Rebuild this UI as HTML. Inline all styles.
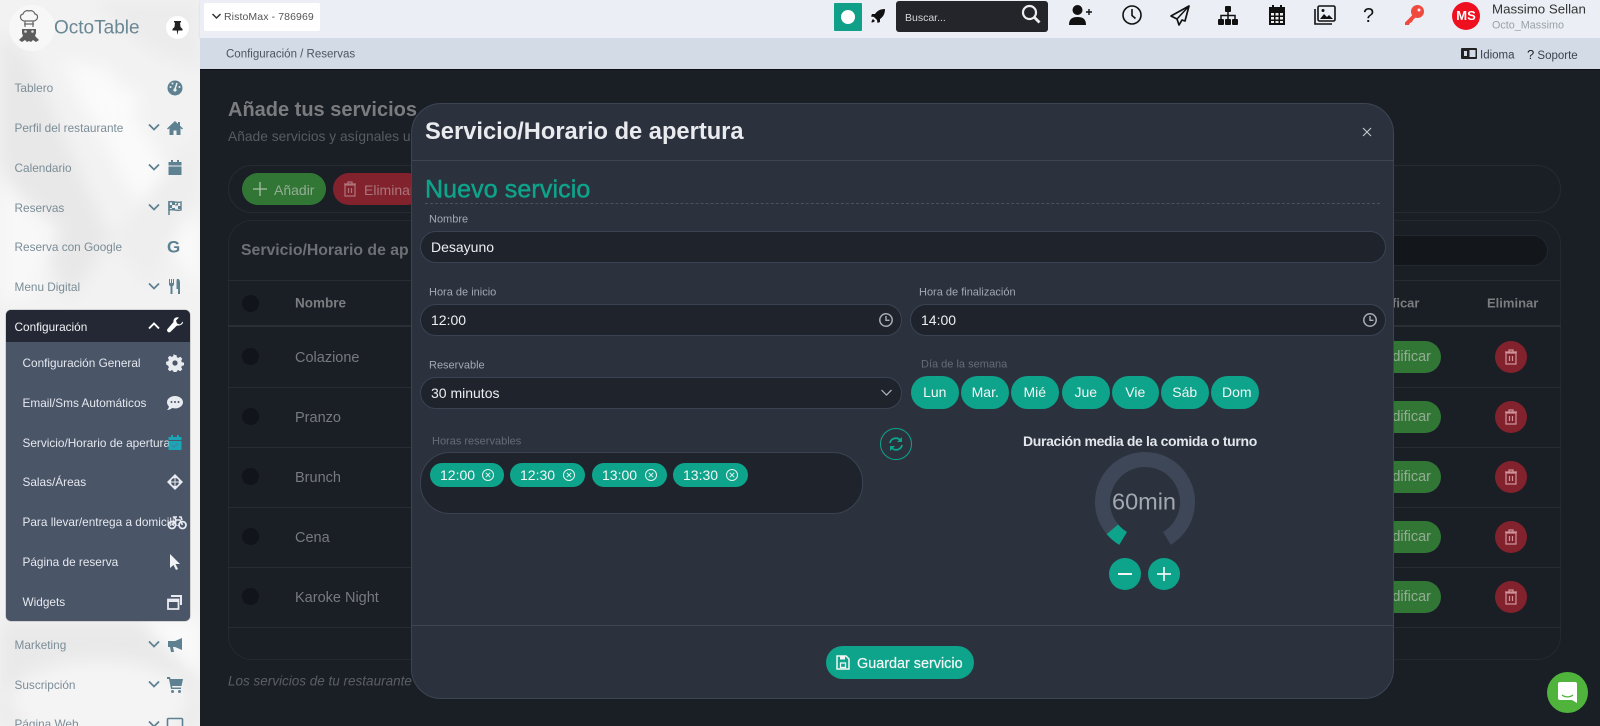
<!DOCTYPE html>
<html lang="es"><head><meta charset="utf-8"><title>OctoTable</title>
<style>
*{box-sizing:border-box}
html,body{margin:0;padding:0}
body{width:1600px;height:726px;overflow:hidden;position:relative;background:#1a1e25;font-family:"Liberation Sans",sans-serif}
.a{position:absolute}
.t{position:absolute;white-space:nowrap;transform:translateY(-50%);line-height:1;margin-top:1px}
.sb{left:14.5px;font-size:11.8px;color:#7b8d97}
.sub{left:22.5px;font-size:11.8px;color:#e6e9ee}
.ic{position:absolute;width:18px;height:18px;left:166px}
.ch{position:absolute;left:147px;width:14px;height:14px;margin-top:-1px}
.top{position:absolute;width:24px;height:24px;top:3px}
.nm{left:295px;font-size:14.5px;color:#777a7e}
.dot{position:absolute;left:242px;width:17px;height:17px;border-radius:50%;background:#11141a}
.ln{position:absolute;left:228px;width:1333px;height:1px;background:#272c34}
.mod{position:absolute;width:60px;left:1381px;height:32px;background:#327636;border-radius:0 16px 16px 0;color:#93ad94;font-size:14.5px;line-height:32px;text-align:right;padding-right:10px}
.del{position:absolute;left:1495px;width:32px;height:32px;border-radius:50%;background:#82222d}
.del svg{position:absolute;left:9px;top:8px}
.lab{font-size:11px;color:#a3a9b3}
.inp{position:absolute;background:#1f232c;border:1px solid #3b4352;border-radius:17px;color:#eceef1;font-size:14px;line-height:30px;padding-left:10px}
.day{position:absolute;top:376px;height:33px;width:47.5px;border-radius:17px;background:#0ea48b;color:#f2f6f5;font-size:14px;line-height:33px;text-align:center}
.chip{position:absolute;top:463px;height:24px;border-radius:12px;background:#0ea48b;color:#f2f6f5;font-size:14px;line-height:24px;padding-left:10px}
.chip svg{position:absolute;right:9px;top:5px}
.rb{position:absolute;width:32px;height:32px;border-radius:50%;background:#0ea48b;top:558px}
</style></head><body>

<!-- Sidebar -->
<div class="a" style="left:0;top:0;width:200px;height:726px;background:#f2f2f2;overflow:hidden">
<svg class="a" style="left:0;top:0" width="200" height="726" viewBox="0 0 200 726">
<defs><filter id="b"><feGaussianBlur stdDeviation="8"/></filter></defs>
<g filter="url(#b)">
<polygon points="0,30 30,60 110,240 70,300 0,160" fill="#e8e8e8"/>
<polygon points="90,0 200,0 200,70 150,50" fill="#ececec"/>
<polygon points="60,60 110,70 200,230 200,290 130,190" fill="#fafafa"/>
<polygon points="110,240 200,130 200,190 150,290" fill="#eeeeee"/>
<polygon points="0,180 60,230 30,300 0,300" fill="#f8f8f8"/>
<ellipse cx="110" cy="100" rx="30" ry="14" fill="#fbfbfb"/>
<rect x="0" y="622" width="200" height="104" fill="#e9e9e9"/>
<ellipse cx="100" cy="700" rx="90" ry="40" fill="#f4f4f4"/>
<polygon points="140,620 200,620 200,680" fill="#fafafa"/>
</g>
</svg>
<div class="a" style="left:9px;top:5px;width:46px;height:46px;border-radius:50%;background:#f7f7f7"></div>
<svg class="a" style="left:17px;top:9px" width="24" height="36" viewBox="0 0 24 36">
<path d="M7 12C3 11 2 6 6 5 7 2 10 1 12 2c2-1 5 0 6 3 4 1 3 6-1 7z" fill="none" stroke="#666" stroke-width="1.200"/>
<path d="M8 12v6M16 12v6M7 15h10" fill="none" stroke="#666" stroke-width="1.200"/>
<path d="M5 20h14v4l-1 3 4 4-3 2-3-2-2 2-2-1-2 1-2-2-3 2-3-2 4-4-1-3z" fill="#5c5c5c"/>
<circle cx="8.500" cy="22.500" r="1.300" fill="#ddd"/><circle cx="15.500" cy="22.500" r="1.300" fill="#ddd"/>
</svg>
<div class="t" style="left:54px;top:27px;font-size:19px;color:#6a8794">OctoTable</div>
<div class="a" style="left:166px;top:16px;width:23px;height:23px;border-radius:50%;background:#fff"></div>
<svg class="a" style="left:172px;top:21px" width="11" height="14" viewBox="0 0 11 14"><path d="M2 0h7v1.500H8l.5 4.500 2 2v1.500H6.300L5.500 14 4.700 9.500H.5V8l2-2L3 1.500H2z" fill="#222"/></svg>

<div class="t sb" style="top:88px">Tablero</div>
<svg class="ic" style="top:79px" viewBox="0 0 18 18"><circle cx="9" cy="9" r="7.500" fill="#5e8191"/><path d="M9 10L11 4" stroke="#eee" stroke-width="1.500"/><circle cx="4.500" cy="8" r="1" fill="#eee"/><circle cx="6.500" cy="4.500" r="1" fill="#eee"/><circle cx="13.500" cy="8" r="1" fill="#eee"/><circle cx="9" cy="11" r="1.600" fill="#eee"/></svg>

<div class="t sb" style="top:128px">Perfil del restaurante</div>
<svg class="ch" style="top:121px" viewBox="0 0 14 14"><path d="M2 4.500l5 5 5-5" fill="none" stroke="#5e8191" stroke-width="1.800"/></svg>
<svg class="ic" style="top:119px" viewBox="0 0 18 18"><path d="M9 2L1 9.500l1 1L3.500 9.300V16h4v-4.500h3V16h4V9.300L16 10.500l1-1-3-2.800V3h-2v1.900z" fill="#5e8191"/></svg>

<div class="t sb" style="top:168px">Calendario</div>
<svg class="ch" style="top:161px" viewBox="0 0 14 14"><path d="M2 4.500l5 5 5-5" fill="none" stroke="#5e8191" stroke-width="1.800"/></svg>
<svg class="ic" style="top:159px" viewBox="0 0 18 18"><path d="M5 1h2v2h4V1h2v2h2.500v3.500h-13V3H5zM2.500 7.500h13V16h-13z" fill="#5e8191"/></svg>

<div class="t sb" style="top:208px">Reservas</div>
<svg class="ch" style="top:201px" viewBox="0 0 14 14"><path d="M2 4.500l5 5 5-5" fill="none" stroke="#5e8191" stroke-width="1.800"/></svg>
<svg class="ic" style="top:199px" viewBox="0 0 18 18"><path d="M3 2v14" stroke="#5e8191" stroke-width="1.500"/><path d="M3 3c4-1.500 7 1.500 12 0v8c-5 1.500-8-1.500-12 0z" fill="none" stroke="#5e8191" stroke-width="1.400"/><path d="M6 3v3h3V3zM12 3.500v3H9v-.5zM6 6v3H3V6zM9 9v2.500H6V9zM15 7v3h-3V7z" fill="#5e8191"/></svg>

<div class="t sb" style="top:247px">Reserva con Google</div>
<div class="t" style="left:167px;top:246px;font-size:17px;font-weight:bold;color:#5e8191">G</div>

<div class="t sb" style="top:287px">Menu Digital</div>
<svg class="ch" style="top:280px" viewBox="0 0 14 14"><path d="M2 4.500l5 5 5-5" fill="none" stroke="#5e8191" stroke-width="1.800"/></svg>
<svg class="ic" style="top:278px" viewBox="0 0 18 18"><path d="M3 1v5c0 1.500 1 2 1.500 2.300V16h2V8.300C7 8 8 7.500 8 6V1H7v4H6V1H5v4H4V1zM11 1c2-.5 3 1 3 4v11h-2v-5h-1.500V5C10.500 3 10.500 1.500 11 1z" fill="#5e8191"/></svg>

<!-- Config panel -->
<div class="a" style="left:6px;top:310px;width:184px;height:311px;border-radius:5px;background:#4a5568;overflow:hidden;box-shadow:0 0 1px #333">
<div class="a" style="left:0;top:0;width:184px;height:32px;background:#232834"></div>
</div>
<div class="t" style="left:14.5px;top:326.500px;font-size:11.8px;color:#f2f3f5">Configuración</div>
<svg class="ch" style="top:320px;left:147px" viewBox="0 0 14 14"><path d="M2 9.500l5-5 5 5" fill="none" stroke="#fff" stroke-width="1.900"/></svg>
<svg class="ic" style="top:317px;left:166px" viewBox="0 0 18 18"><path d="M17 4.500l-3 3-3-1-1-3 3-3c-3-1-6 1-5.500 4.500L1.500 12c-1.500 1.500 1 4.500 2.800 3L11 8.500c3.500.5 6.500-1.500 6-4z" fill="#fff"/></svg>

<div class="t sub" style="top:363px">Configuración General</div>
<svg class="ic" style="top:354px" viewBox="0 0 18 18"><path d="M9 1l1.500.1.400 2.100 1.500.7 1.900-1.100 2 2-1.100 1.900.7 1.500 2.100.4v2.800l-2.100.4-.7 1.500 1.100 1.900-2 2-1.900-1.100-1.500.7-.4 2.100H7.600l-.4-2.100-1.500-.7-1.900 1.100-2-2 1.100-1.900-.7-1.500L.1 10.400V7.600l2.100-.4.7-1.500L1.800 3.800l2-2 1.900 1.100 1.500-.7.400-2.100z" fill="#e8ebef"/><circle cx="9" cy="9" r="2.600" fill="#4a5568"/></svg>

<div class="t sub" style="top:403px">Email/Sms Automáticos</div>
<svg class="ic" style="top:394px" viewBox="0 0 18 18"><path d="M9 2c4.500 0 8 2.800 8 6.200s-3.500 6.200-8 6.200c-1 0-2-.1-2.800-.4C5 15 3 16 1 16c1-1 1.800-2.300 2-3.500C1.800 11.400 1 9.900 1 8.200 1 4.800 4.500 2 9 2z" fill="#e8ebef"/><circle cx="5.500" cy="8" r="1" fill="#4a5568"/><circle cx="9" cy="8" r="1" fill="#4a5568"/><circle cx="12.500" cy="8" r="1" fill="#4a5568"/></svg>

<div class="t sub" style="top:443px">Servicio/Horario de apertura</div>
<svg class="ic" style="top:434px" viewBox="0 0 18 18"><path d="M5 1h2v2h4V1h2v2h2.500v13h-13V3H5z" fill="#1ba5b5"/><path d="M2.500 6.500h13" stroke="#4a5568"/><path d="M6 11l2 2 4-4" stroke="#4a7fa0" fill="none" stroke-width="1.200"/></svg>

<div class="t sub" style="top:482px">Salas/Áreas</div>
<svg class="ic" style="top:473px" viewBox="0 0 18 18"><path d="M9 1l8 8-8 8-8-8z" fill="#e8ebef"/><circle cx="9" cy="9" r="4" fill="#4a5568"/><path d="M9 5v8M5 9h8" stroke="#e8ebef"/></svg>

<div class="t sub" style="top:522px;width:156px;overflow:hidden">Para llevar/entrega a domicilio</div>
<svg class="a" style="left:167px;top:513px" width="20" height="18" viewBox="0 0 20 18"><circle cx="5" cy="12" r="3.500" fill="none" stroke="#e8ebef" stroke-width="1.800"/><circle cx="15.500" cy="12" r="3.500" fill="none" stroke="#e8ebef" stroke-width="1.800"/><path d="M5 12l4-5h4l2.500 5M9 7L7 4h3M12 4h2l1 3" fill="none" stroke="#e8ebef" stroke-width="1.600"/></svg>

<div class="t sub" style="top:562px">Página de reserva</div>
<svg class="ic" style="top:553px" viewBox="0 0 18 18"><path d="M4 1v14l3.500-3 2.500 5 2-1-2.500-5H14z" fill="#f0f2f5"/></svg>

<div class="t sub" style="top:602px">Widgets</div>
<svg class="ic" style="top:593px" viewBox="0 0 18 18"><path d="M5 2h11v10h-2V4H5z" fill="#e8ebef"/><path d="M2 6.500h10.500V16H2z" fill="none" stroke="#e8ebef" stroke-width="1.800"/><path d="M2 6.500h10.500v2.500H2z" fill="#e8ebef"/></svg>

<div class="t sb" style="top:645px">Marketing</div>
<svg class="ch" style="top:638px" viewBox="0 0 14 14"><path d="M2 4.500l5 5 5-5" fill="none" stroke="#5e8191" stroke-width="1.800"/></svg>
<svg class="ic" style="top:636px" viewBox="0 0 18 18"><path d="M16 2v12L9 11H7l1 5H5L4 11H2V5h7z" fill="#5e8191"/></svg>

<div class="t sb" style="top:685px">Suscripción</div>
<svg class="ch" style="top:678px" viewBox="0 0 14 14"><path d="M2 4.500l5 5 5-5" fill="none" stroke="#5e8191" stroke-width="1.800"/></svg>
<svg class="ic" style="top:676px" viewBox="0 0 18 18"><path d="M1 1h3l.5 2H17l-1.500 7H6l.3 1.500H15V13H5L3 3H1z" fill="#5e8191"/><circle cx="6.500" cy="15.500" r="1.500" fill="#5e8191"/><circle cx="13.500" cy="15.500" r="1.500" fill="#5e8191"/></svg>

<div class="t sb" style="top:724px">Página Web</div>
<svg class="ch" style="top:718px" viewBox="0 0 14 14"><path d="M2 4.500l5 5 5-5" fill="none" stroke="#5e8191" stroke-width="1.800"/></svg>
<svg class="ic" style="top:716px" viewBox="0 0 18 18"><rect x="1.500" y="2.500" width="15" height="10" rx="1" fill="none" stroke="#5e8191" stroke-width="1.600"/></svg>
</div>

<!-- Top bar -->
<div class="a" style="left:200px;top:0;width:1400px;height:38px;background:#ebeff5;box-shadow:0 1px 2px rgba(0,0,0,.12)"></div>
<div class="a" style="left:200px;top:38px;width:1400px;height:32px;background:#d3dbe7;border-bottom:1px solid #0d0f13"></div>
<div class="a" style="left:204px;top:3px;width:116px;height:28px;background:#fff;border-radius:2px"></div>
<svg class="a" style="left:211px;top:11px" width="11" height="11" viewBox="0 0 11 11"><path d="M1.500 3l4 4 4-4" fill="none" stroke="#333" stroke-width="1.500"/></svg>
<div class="t" style="left:224px;top:16px;font-size:10.5px;color:#555;letter-spacing:.1px">RistoMax - 786969</div>
<div class="t" style="left:226px;top:54px;font-size:11.5px;color:#4d5560">Configuración / Reservas</div>

<div class="a" style="left:834px;top:3px;width:28px;height:28px;background:#10a08a;border-radius:1px"></div>
<div class="a" style="left:841px;top:10px;width:14px;height:14px;border-radius:50%;background:#fff"></div>
<svg class="a" style="left:870px;top:8px" width="16" height="16" viewBox="0 0 16 16"><path d="M15 1c-5 0-8 2-10 5H2L1 8.500l3 .5 3 3 .5 3L10 14v-3c3-2 5-5 5-10zM3 11c-1 1-1.500 2-1.500 3.500C3 14.500 4 14 5 13z" fill="#111"/></svg>
<div class="a" style="left:896px;top:1px;width:152px;height:31px;background:#23252a;border-radius:3px"></div>
<div class="t" style="left:905px;top:17px;font-size:10.5px;color:#d6d6d6">Buscar...</div>
<svg class="a" style="left:1020px;top:3px" width="22" height="22" viewBox="0 0 22 22"><circle cx="9.500" cy="9.500" r="6.500" fill="none" stroke="#eee" stroke-width="2.200"/><path d="M14.500 14.500l5 5" stroke="#eee" stroke-width="2.800"/></svg>

<svg class="top" style="left:1068px" viewBox="0 0 24 24"><circle cx="9.500" cy="7" r="5" fill="#111"/><path d="M1 22c0-6 3-8 8.500-8s8.500 2 8.500 8z" fill="#111"/><path d="M18 9h6M21 6v6" stroke="#111" stroke-width="1.400"/></svg>
<svg class="top" style="left:1120px" viewBox="0 0 24 24"><circle cx="12" cy="12" r="9" fill="none" stroke="#111" stroke-width="1.600"/><path d="M12 6v6.500l3.500 3" fill="none" stroke="#111" stroke-width="1.600"/></svg>
<svg class="top" style="left:1168px" viewBox="0 0 24 24"><path d="M21 3L3 13l6 3 2 6 3-5 3 1z" fill="none" stroke="#111" stroke-width="1.700" stroke-linejoin="round"/><path d="M21 3L9 16v0" stroke="#111" stroke-width="1.500"/></svg>
<svg class="top" style="left:1216px" viewBox="0 0 24 24"><rect x="9" y="3" width="6" height="6" rx="1" fill="#111"/><rect x="2" y="16" width="6" height="6" rx="1" fill="#111"/><rect x="9" y="16" width="6" height="6" rx="1" fill="#111"/><rect x="16" y="16" width="6" height="6" rx="1" fill="#111"/><path d="M12 9v7M5 16v-3.500h14V16" fill="none" stroke="#111" stroke-width="1.500"/></svg>
<svg class="top" style="left:1265px" viewBox="0 0 24 24"><path d="M7 2h2v2h6V2h2v2h3v18H4V4h3z" fill="#111"/><g fill="#eee"><rect x="6" y="10" width="3" height="2.500"/><rect x="10.500" y="10" width="3" height="2.500"/><rect x="15" y="10" width="3" height="2.500"/><rect x="6" y="14" width="3" height="2.500"/><rect x="10.500" y="14" width="3" height="2.500"/><rect x="15" y="14" width="3" height="2.500"/><rect x="6" y="18" width="3" height="2"/><rect x="10.500" y="18" width="3" height="2"/><rect x="15" y="18" width="3" height="2"/></g></svg>
<svg class="top" style="left:1313px" viewBox="0 0 24 24"><rect x="5" y="3" width="17" height="15" rx="1.500" fill="none" stroke="#111" stroke-width="1.600"/><path d="M2 6v15h17" fill="none" stroke="#111" stroke-width="1.600"/><path d="M7 16l4-5 3 3 2-2 4 4z" fill="#111"/><circle cx="10" cy="7.500" r="1.500" fill="#111"/></svg>
<div class="t" style="left:1363px;top:15px;font-size:20px;color:#111">?</div>
<svg class="top" style="left:1402px" viewBox="0 0 24 24"><circle cx="15.500" cy="8.500" r="6.500" fill="#ef4a3d"/><path d="M11.500 11L3 19.500v2.500h4l1-2 2-1 1-2 3-3z" fill="#ef4a3d"/><circle cx="17" cy="7" r="1.500" fill="#ebeff5"/></svg>
<div class="a" style="left:1452px;top:2px;width:28px;height:28px;border-radius:50%;background:#ee0f1f;color:#fff;font-weight:bold;font-size:13px;line-height:28px;text-align:center">MS</div>
<div class="t" style="left:1492px;top:8px;font-size:13.3px;color:#333">Massimo Sellan</div>
<div class="t" style="left:1492px;top:25px;font-size:10.8px;color:#98a0a8">Octo_Massimo</div>

<svg class="a" style="left:1461px;top:48px" width="16" height="11" viewBox="0 0 16 11"><rect x="0" y="0" width="16" height="11" rx="1" fill="#222"/><rect x="8.500" y="2" width="6" height="7" fill="#d3dbe7"/><rect x="3" y="3" width="3" height="5" fill="#d3dbe7"/></svg>
<div class="t" style="left:1480px;top:54.500px;font-size:11.5px;color:#3c434c">Idioma</div>
<div class="t" style="left:1527px;top:53.500px;font-size:11.5px;color:#3c434c"><span style="font-size:13px;color:#222">?</span> Soporte</div>

<!-- Background page, dimmed -->
<div class="t" style="left:228px;top:109px;font-size:20px;font-weight:bold;color:#7b7c7f">Añade tus servicios</div>
<div class="t" style="left:228px;top:136px;font-size:13.8px;color:#575c63">Añade servicios y asígnales u</div>
<div class="a" style="left:228px;top:165px;width:1333px;height:48px;border:1px solid #262b33;border-radius:24px"></div>
<div class="a" style="left:242px;top:173px;width:84px;height:32px;border-radius:16px;background:#327636"></div>
<svg class="a" style="left:252px;top:181px" width="16" height="16" viewBox="0 0 16 16"><path d="M8 1v14M1 8h14" stroke="#a8c1a9" stroke-width="1.300"/></svg>
<div class="t" style="left:274px;top:189px;font-size:14px;color:#93ad94">Añadir</div>
<div class="a" style="left:333px;top:173px;width:90px;height:32px;border-radius:16px;background:#82222d"></div>
<svg class="a" style="left:343px;top:181px" width="14" height="16" viewBox="0 0 14 16"><path d="M2 4h10v11H2zM1 3h12M5 3V1h4v2M5.500 7v5M8.500 7v5" fill="none" stroke="#b0737a" stroke-width="1.200"/></svg>
<div class="t" style="left:364px;top:189px;font-size:14px;color:#a9767c">Eliminar</div>

<div class="a" style="left:228px;top:220px;width:1333px;height:440px;border:1px solid #242930;border-radius:24px"></div>
<div class="t" style="left:241px;top:250px;font-size:15.8px;font-weight:bold;color:#6d7074">Servicio/Horario de ap</div>
<div class="a" style="left:1390px;top:235px;width:158px;height:31px;background:#13161b;border:1px solid #23272e;border-radius:0 16px 16px 0"></div>
<div class="ln" style="top:280px"></div>
<div class="ln" style="top:325px;height:2px;background:#2a2f37"></div>
<div class="ln" style="top:387px"></div>
<div class="ln" style="top:447px"></div>
<div class="ln" style="top:507px"></div>
<div class="ln" style="top:567px"></div>
<div class="ln" style="top:627px"></div>
<div class="dot" style="top:295px"></div>
<div class="dot" style="top:348px"></div>
<div class="dot" style="top:408px"></div>
<div class="dot" style="top:468px"></div>
<div class="dot" style="top:528px"></div>
<div class="dot" style="top:588px"></div>
<div class="t" style="left:295px;top:302px;font-size:13.5px;font-weight:bold;color:#7b7d80">Nombre</div>
<div class="t nm" style="top:357px">Colazione</div>
<div class="t nm" style="top:417px">Pranzo</div>
<div class="t nm" style="top:477px">Brunch</div>
<div class="t nm" style="top:537px">Cena</div>
<div class="t nm" style="top:597px">Karoke Night</div>
<div class="t" style="left:1392px;top:302px;font-size:13px;font-weight:bold;color:#7b7d80">ficar</div>
<div class="t" style="left:1487px;top:302px;font-size:13px;font-weight:bold;color:#7b7d80">Eliminar</div>
<div class="mod" style="top:341px">dificar</div>
<div class="mod" style="top:401px">dificar</div>
<div class="mod" style="top:461px">dificar</div>
<div class="mod" style="top:521px">dificar</div>
<div class="mod" style="top:581px">dificar</div>
<div class="del" style="top:341px"><svg width="14" height="16" viewBox="0 0 14 16"><path d="M2 4h10v11H2zM1 3h12M5 3V1h4v2M5.500 7v5M8.500 7v5" fill="none" stroke="#cf9399" stroke-width="1.200"/></svg></div>
<div class="del" style="top:401px"><svg width="14" height="16" viewBox="0 0 14 16"><path d="M2 4h10v11H2zM1 3h12M5 3V1h4v2M5.500 7v5M8.500 7v5" fill="none" stroke="#cf9399" stroke-width="1.200"/></svg></div>
<div class="del" style="top:461px"><svg width="14" height="16" viewBox="0 0 14 16"><path d="M2 4h10v11H2zM1 3h12M5 3V1h4v2M5.500 7v5M8.500 7v5" fill="none" stroke="#cf9399" stroke-width="1.200"/></svg></div>
<div class="del" style="top:521px"><svg width="14" height="16" viewBox="0 0 14 16"><path d="M2 4h10v11H2zM1 3h12M5 3V1h4v2M5.500 7v5M8.500 7v5" fill="none" stroke="#cf9399" stroke-width="1.200"/></svg></div>
<div class="del" style="top:581px"><svg width="14" height="16" viewBox="0 0 14 16"><path d="M2 4h10v11H2zM1 3h12M5 3V1h4v2M5.500 7v5M8.500 7v5" fill="none" stroke="#cf9399" stroke-width="1.200"/></svg></div>
<div class="t" style="left:228px;top:680px;font-size:13.5px;font-style:italic;color:#5b5f65">Los servicios de tu restaurante</div>

<!-- Modal -->
<div class="a" style="left:411px;top:103px;width:983px;height:596px;background:#2b323e;border:1px solid #3d4553;border-radius:30px"></div>
<div class="a" style="left:412px;top:160px;width:981px;height:1px;background:#3d4553"></div>
<div class="a" style="left:412px;top:625px;width:981px;height:1px;background:#3d4553"></div>
<div class="t" style="left:425px;top:132px;font-size:23.7px;font-weight:bold;color:#e9ebef">Servicio/Horario de apertura</div>
<svg class="a" style="left:1361px;top:126px" width="12" height="12" viewBox="0 0 12 12"><path d="M2 2l8 8M10 2l-8 8" stroke="#c6c9cf" stroke-width="1.100"/></svg>
<div class="t" style="left:425px;top:189px;font-size:25px;color:#0ea48b;-webkit-text-stroke:.45px #0ea48b;letter-spacing:.1px">Nuevo servicio</div>
<div class="a" style="left:425px;top:203px;width:955px;border-top:1px dashed #4a5160"></div>

<div class="t lab" style="left:429px;top:219px">Nombre</div>
<div class="inp" style="left:420px;top:231px;width:966px;height:32px">Desayuno</div>

<div class="t lab" style="left:429px;top:292px">Hora de inicio</div>
<div class="inp" style="left:420px;top:304px;width:482px;height:32px">12:00</div>
<svg class="a" style="left:878px;top:312px" width="16" height="16" viewBox="0 0 16 16"><circle cx="8" cy="8" r="6.200" fill="none" stroke="#a9adb4" stroke-width="1.500"/><path d="M8 4v4.300h3.500" fill="none" stroke="#a9adb4" stroke-width="1.400"/></svg>
<div class="t lab" style="left:919px;top:292px">Hora de finalización</div>
<div class="inp" style="left:910px;top:304px;width:476px;height:32px">14:00</div>
<svg class="a" style="left:1362px;top:312px" width="16" height="16" viewBox="0 0 16 16"><circle cx="8" cy="8" r="6.200" fill="none" stroke="#a9adb4" stroke-width="1.500"/><path d="M8 4v4.300h3.500" fill="none" stroke="#a9adb4" stroke-width="1.400"/></svg>

<div class="t lab" style="left:429px;top:365px">Reservable</div>
<div class="inp" style="left:420px;top:377px;width:482px;height:32px">30 minutos</div>
<svg class="a" style="left:880px;top:387px" width="13" height="11" viewBox="0 0 13 11"><path d="M1.500 3l5 5 5-5" fill="none" stroke="#b5b9bf" stroke-width="1.200"/></svg>

<div class="t" style="left:921px;top:364px;font-size:11px;color:#656c78">Día de la semana</div>
<div class="day" style="left:911px">Lun</div>
<div class="day" style="left:961px;padding-left:1px">Mar.</div>
<div class="day" style="left:1011px">Mié</div>
<div class="day" style="left:1062px">Jue</div>
<div class="day" style="left:1111.500px">Vie</div>
<div class="day" style="left:1161px">Sáb</div>
<div class="day" style="left:1211px;padding-left:4px">Dom</div>

<div class="t" style="left:432px;top:441px;font-size:11px;color:#656c78">Horas reservables</div>
<div class="a" style="left:420px;top:452px;width:443px;height:62px;background:#1f232c;border:1px solid #3b4352;border-radius:30px"></div>
<div class="chip" style="left:430px;width:74px">12:00<svg width="14" height="14" viewBox="0 0 14 14"><circle cx="7" cy="7" r="5.500" fill="none" stroke="#e6f3f0" stroke-width="1"/><path d="M4.800 4.800l4.400 4.400M9.200 4.800l-4.400 4.400" stroke="#e6f3f0"/></svg></div>
<div class="chip" style="left:510px;width:75px">12:30<svg width="14" height="14" viewBox="0 0 14 14"><circle cx="7" cy="7" r="5.500" fill="none" stroke="#e6f3f0" stroke-width="1"/><path d="M4.800 4.800l4.400 4.400M9.200 4.800l-4.400 4.400" stroke="#e6f3f0"/></svg></div>
<div class="chip" style="left:592px;width:74.500px">13:00<svg width="14" height="14" viewBox="0 0 14 14"><circle cx="7" cy="7" r="5.500" fill="none" stroke="#e6f3f0" stroke-width="1"/><path d="M4.800 4.800l4.400 4.400M9.200 4.800l-4.400 4.400" stroke="#e6f3f0"/></svg></div>
<div class="chip" style="left:673px;width:75px">13:30<svg width="14" height="14" viewBox="0 0 14 14"><circle cx="7" cy="7" r="5.500" fill="none" stroke="#e6f3f0" stroke-width="1"/><path d="M4.800 4.800l4.400 4.400M9.200 4.800l-4.400 4.400" stroke="#e6f3f0"/></svg></div>

<div class="a" style="left:880px;top:428px;width:32px;height:32px;border-radius:50%;border:1px solid #0ea48b"></div>
<svg class="a" style="left:888px;top:436px" width="16" height="16" viewBox="0 0 16 16"><path d="M2 7c.5-3 3-4.800 6-4.800 2 0 3.600 1 4.600 2.300M14 9c-.5 3-3 4.800-6 4.800-2 0-3.600-1-4.600-2.300" fill="none" stroke="#0ea48b" stroke-width="1.800"/><path d="M14 1v5h-5zM2 15v-5h5z" fill="#0ea48b"/></svg>

<div class="t" style="left:1023px;top:440px;font-size:14px;font-weight:bold;color:#e3e6ea;letter-spacing:-.34px">Duración media de la comida o turno</div>
<svg class="a" style="left:1085px;top:442px" width="120" height="120" viewBox="1085 442 120 120">
<path d="M1123.100 538.400A42.500 42.500 0 1 1 1166.900 538.400" fill="none" stroke="#3e4757" stroke-width="15"/>
<path d="M1123.100 538.400A42.500 42.500 0 0 1 1112.400 529.300" fill="none" stroke="#0ea48b" stroke-width="15"/>
</svg>
<div class="t" style="left:1112px;top:501px;font-size:23.5px;color:#a3a8b0">60min</div>
<div class="rb" style="left:1109px"></div>
<div class="a" style="left:1118px;top:573px;width:14px;height:2px;background:#eef5f3"></div>
<div class="rb" style="left:1148px"></div>
<svg class="a" style="left:1157px;top:567px" width="14" height="14" viewBox="0 0 14 14"><path d="M7 0v14M0 7h14" stroke="#eef5f3" stroke-width="1.700"/></svg>

<div class="a" style="left:825.500px;top:646px;width:148px;height:33px;border-radius:17px;background:#0ea48b"></div>
<svg class="a" style="left:836px;top:655px" width="14" height="15" viewBox="0 0 14 15"><path d="M1 1h9l3 3v10H1z" fill="none" stroke="#f2f6f5" stroke-width="1.500"/><path d="M4 1.500h5v3H4z" fill="#f2f6f5"/><rect x="4.500" y="8" width="5" height="4.500" fill="none" stroke="#f2f6f5" stroke-width="1.300"/></svg>
<div class="t" style="left:857px;top:663px;font-size:14.4px;color:#f2f6f5;-webkit-text-stroke:.2px #f2f6f5">Guardar servicio</div>

<!-- Chat -->
<div class="a" style="left:1547px;top:672px;width:41px;height:41px;border-radius:50%;background:#4fb33c"></div>
<svg class="a" style="left:1558px;top:682px" width="19" height="22" viewBox="0 0 19 22"><path d="M2 0h15a2 2 0 0 1 2 2v19l-5-3H2a2 2 0 0 1-2-2V2a2 2 0 0 1 2-2z" fill="#fff"/><path d="M4 13c3 2.500 8 2.500 11 0" fill="none" stroke="#4fb33c" stroke-width="1.300"/></svg>
</body></html>
